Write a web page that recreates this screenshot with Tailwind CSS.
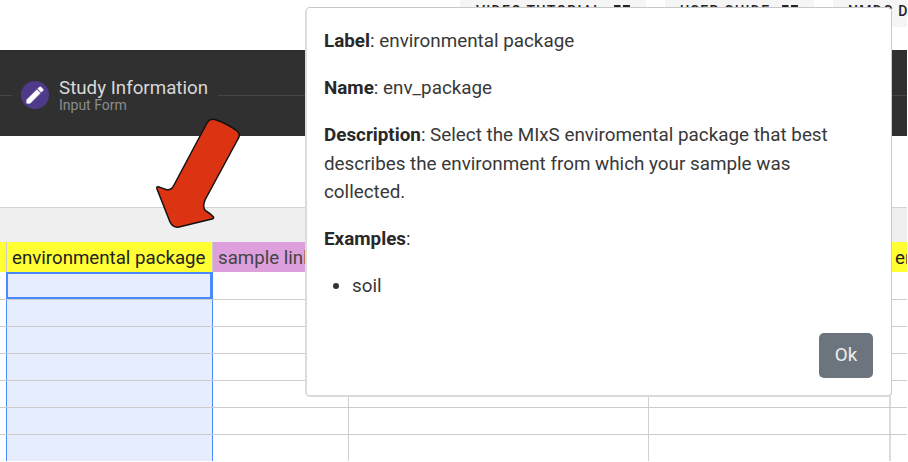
<!DOCTYPE html>
<html lang="en">
<head>
<meta charset="utf-8">
<title>Study Information</title>
<script src="https://cdn.jsdelivr.net/npm/@tailwindcss/browser@4"></script>
</head>
<body class="relative w-[908px] h-[462px] overflow-hidden bg-white font-[Roboto,sans-serif] text-[#383838]">
<div class="relative h-[461px] w-[907px] overflow-hidden">
<div class="flex h-[50px] gap-[19px] pl-[460px] text-[14px] leading-[20px] font-medium tracking-[1.28px] text-[#222] whitespace-nowrap">
  <div class="flex h-[27px] w-[186px] shrink-0 gap-[11px] bg-[#f5f5f5] pl-[16px] pt-px">VIDEO TUTORIAL
    <svg class="mt-[3px] size-[17px]" viewBox="0 0 17 17" fill="none" stroke="#222" stroke-width="1.8"><path d="M7.500 2H2v13h13v-5M10 2H16v6M16 2L7 11"/></svg></div>
  <div class="flex h-[27px] w-[149px] shrink-0 gap-[11px] bg-[#f5f5f5] pl-[15px] pt-px">USER GUIDE
    <svg class="mt-[3px] size-[17px]" viewBox="0 0 17 17" fill="none" stroke="#222" stroke-width="1.8"><path d="M7.500 2H2v13h13v-5M10 2H16v6M16 2L7 11"/></svg></div>
  <div class="h-[27px] w-[160px] shrink-0 bg-[#f5f5f5] pl-[15px] pt-px">NMDC DOCS</div>
</div>
<header class="flex h-[86px] items-center bg-[#303030] pt-[4px]">
  <div class="h-px w-[12px] bg-[#454545]"></div>
  <div class="ml-[9px] flex size-[28px] shrink-0 items-center justify-center rounded-full bg-[#4f3a8a]">
    <svg class="size-[22px]" viewBox="0 0 24 24" fill="#fff" stroke="#fff" stroke-width=".7" stroke-linejoin="round"><path d="M3 17.25V21h3.75L17.81 9.94l-3.75-3.75L3 17.25zM20.71 7.04a1 1 0 0 0 0-1.41l-2.34-2.34a1 1 0 0 0-1.41 0l-1.83 1.83 3.75 3.75 1.83-1.83z"/></svg></div>
  <div class="ml-[10px] w-[159px] shrink-0 pt-px whitespace-nowrap">
    <div class="text-[18.75px] leading-[19px] text-[#d8d8d8]">Study Information</div>
    <div class="text-[14px] leading-[15px] text-[#8c8c8c]">Input Form</div>
  </div>
  <div class="h-px flex-1 bg-[#454545]"></div>
</header>
<main>
  <div class="h-[71px]"></div>
  <div class="h-[35px] border-t border-[#d4d4d4] bg-[#efefef]"></div>
  <div class="flex h-[30px] text-[18.7px] leading-[32px] whitespace-nowrap text-[#222]">
    <div class="w-[7px] shrink-0 border-r border-[#ccc] bg-[#ffff33]"></div>
    <div class="w-[206px] shrink-0 border-r border-[#ccc] bg-[#ffff33] pl-[5px]">environmental package</div>
    <div class="w-[136px] shrink-0 overflow-hidden bg-[#dda0dd] pl-[5px] text-[#444]">sample linkage</div>
    <div class="w-[542px] shrink-0 border-r border-[#ccc] bg-[#ffff33]"></div>
    <div class="w-[60px] shrink-0 bg-[#ffff33] pl-[4px]">env</div>
  </div>
  <div class="relative grid h-[189px] grid-cols-[7px_206px_136px_300px_242px_16px]">
    <div></div>
    <div class="-ml-px border-x border-[#4b89ff] bg-[#e6edfd]"></div>
    <div class="border-r border-[#d0d0d0]"></div>
    <div class="border-r border-[#d0d0d0]"></div>
    <div class="border-r-2 border-[#dcdcdc]"></div>
    <div></div>
    <div class="absolute inset-x-0 top-px bottom-0 bg-[repeating-linear-gradient(to_bottom,transparent_0_26px,#cccccc_26px_27px)]"></div>
    <div class="absolute left-[6px] top-0 h-[27px] w-[206px] border-2 border-[#4b89ff]"></div>
  </div>
</main>
<svg class="absolute left-[140px] top-[105px] h-[135px] w-[120px]" viewBox="0 0 120 135" fill="#dc3412" stroke="#111" stroke-width="1.5" stroke-linejoin="round"><path d="M67 18Q70 13 75 14.500Q88 19 97 26Q101 29 98 34L65 95Q62 103 66 106Q71 109 73.500 112Q74 113.500 72 114L39 122Q33 123 30 117L17 84Q16 81 19 82Q22 83 26 84.500Q31 86 34 80Z"/></svg>
<section role="dialog" class="absolute left-[305px] top-[7px] h-[390px] w-[587px] rounded-[5px] border border-[#c8c8c8] border-b-2 border-l-2 border-b-[#d9d9d9] border-l-[#dcdcdc] bg-white pl-[17px] pt-[19.3px] text-[18.83px] leading-[28.2px]">
  <p class="mb-[18.8px]"><b class="text-[#282828]">Label</b>: environmental package</p>
  <p class="mb-[18.8px]"><b class="text-[#282828]">Name</b>: env_package</p>
  <p class="mb-[18.8px] whitespace-nowrap"><b class="text-[#282828]">Description</b>: Select the MIxS enviromental package that best<br>describes the environment from which your sample was<br>collected.</p>
  <p class="mb-[18.8px]"><b class="text-[#282828]">Examples</b>:</p>
  <ul class="flex items-center gap-[13px] pl-[9px]"><li class="contents"><span class="size-[6px] rounded-full bg-[#333]"></span>soil</li></ul>
  <button class="absolute right-[18px] bottom-[17px] h-[45px] w-[54px] rounded-[5px] bg-[#6c757d] text-[18.8px] text-[#eee]">Ok</button>
</section>
</div>
</body>
</html>
